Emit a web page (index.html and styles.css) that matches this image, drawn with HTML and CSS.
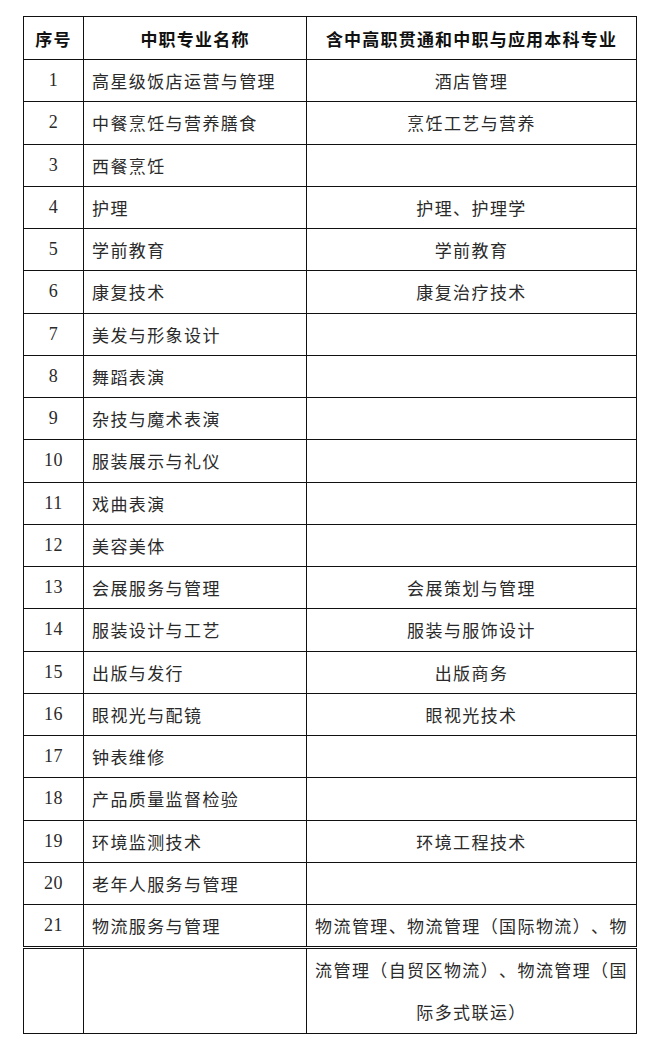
FILE: index.html
```html
<!DOCTYPE html>
<html lang="zh-CN">
<head>
<meta charset="utf-8">
<title>专业对照表</title>
<link rel="stylesheet" href="styles.css">
</head>
<body>
<div class="page">
<table class="grid">
  <colgroup><col class="c1"><col class="c2"><col class="c3"></colgroup>
  <thead>
    <tr class="head"><th>序号</th><th>中职专业名称</th><th>含中高职贯通和中职与应用本科专业</th></tr>
  </thead>
  <tbody>
    <tr><td class="num">1</td><td class="name">高星级饭店运营与管理</td><td class="alt">酒店管理</td></tr>
    <tr><td class="num">2</td><td class="name">中餐烹饪与营养膳食</td><td class="alt">烹饪工艺与营养</td></tr>
    <tr><td class="num">3</td><td class="name">西餐烹饪</td><td class="alt"></td></tr>
    <tr><td class="num">4</td><td class="name">护理</td><td class="alt">护理、护理学</td></tr>
    <tr><td class="num">5</td><td class="name">学前教育</td><td class="alt">学前教育</td></tr>
    <tr><td class="num">6</td><td class="name">康复技术</td><td class="alt">康复治疗技术</td></tr>
    <tr><td class="num">7</td><td class="name">美发与形象设计</td><td class="alt"></td></tr>
    <tr><td class="num">8</td><td class="name">舞蹈表演</td><td class="alt"></td></tr>
    <tr><td class="num">9</td><td class="name">杂技与魔术表演</td><td class="alt"></td></tr>
    <tr><td class="num">10</td><td class="name">服装展示与礼仪</td><td class="alt"></td></tr>
    <tr><td class="num">11</td><td class="name">戏曲表演</td><td class="alt"></td></tr>
    <tr><td class="num">12</td><td class="name">美容美体</td><td class="alt"></td></tr>
    <tr><td class="num">13</td><td class="name">会展服务与管理</td><td class="alt">会展策划与管理</td></tr>
    <tr><td class="num">14</td><td class="name">服装设计与工艺</td><td class="alt">服装与服饰设计</td></tr>
    <tr><td class="num">15</td><td class="name">出版与发行</td><td class="alt">出版商务</td></tr>
    <tr><td class="num">16</td><td class="name">眼视光与配镜</td><td class="alt">眼视光技术</td></tr>
    <tr><td class="num">17</td><td class="name">钟表维修</td><td class="alt"></td></tr>
    <tr><td class="num">18</td><td class="name">产品质量监督检验</td><td class="alt"></td></tr>
    <tr><td class="num">19</td><td class="name">环境监测技术</td><td class="alt">环境工程技术</td></tr>
    <tr><td class="num">20</td><td class="name">老年人服务与管理</td><td class="alt"></td></tr>
    <tr><td class="num">21</td><td class="name">物流服务与管理</td><td class="alt">物流管理、物流管理（国际物流）、物</td></tr>
  </tbody>
</table>
<table class="grid cont">
  <colgroup><col class="c1"><col class="c2"><col class="c3"></colgroup>
  <tbody>
    <tr class="tall"><td class="num"></td><td class="name"></td><td class="alt multi">流管理（自贸区物流）、物流管理（国<br>际多式联运）</td></tr>
  </tbody>
</table>
</div>
</body>
</html>
```

FILE: styles.css
```css
html, body {
  margin: 0;
  padding: 0;
  background: #ffffff;
}

.page {
  padding: 16px 0 0 23px;
}

.grid {
  border-collapse: collapse;
  table-layout: fixed;
  width: 613px;
  font-family: "Noto Sans CJK SC", "Noto Sans", sans-serif;
  font-size: 17px;
  letter-spacing: 1.4px;
  color: #2a2a2a;
  text-spacing-trim: space-all;
  font-feature-settings: "halt" 0, "chws" 0;
}

.c1 { width: 60px; }
.c2 { width: 223px; }
.c3 { width: 330px; }

.grid th,
.grid td {
  border: 1px solid #111111;
  padding: 0;
  vertical-align: middle;
  white-space: nowrap;
  overflow: hidden;
}

.grid tbody tr {
  height: 42.25px;
}

.grid .head {
  height: 43px;
}

.grid th {
  font-weight: bold;
  color: #111111;
  text-align: center;
  letter-spacing: 1.2px;
}

.num {
  text-align: center;
  font-family: "Liberation Serif", "DejaVu Serif", serif;
  font-size: 18px;
  letter-spacing: 0.5px;
}

.name {
  text-align: left;
  padding-left: 8px !important;
}

.alt {
  text-align: center;
  padding: 0 2px !important;
}

.cont {
  margin-top: 1px;
}

.cont .tall {
  height: 84px;
}

.multi {
  line-height: 42px;
}
```
